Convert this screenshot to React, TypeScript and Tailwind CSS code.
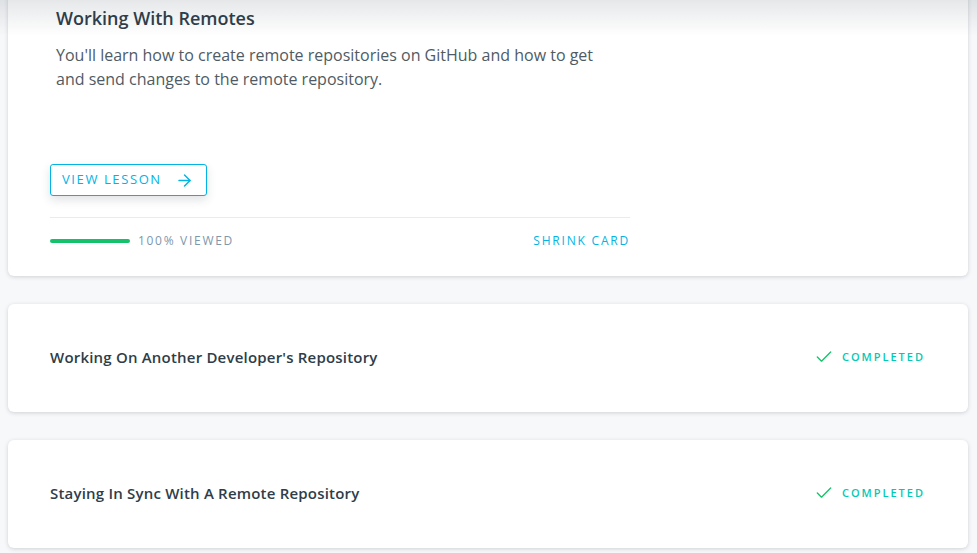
import { ArrowRight, Check } from 'lucide-react'

const lessons = [
  { title: "Working On Another Developer's Repository" },
  { title: 'Staying In Sync With A Remote Repository' },
]

const CollapsedCard = ({ title }: { title: string }) => (
  <div className="bg-white rounded-md shadow-[0_1px_4px_rgba(46,61,73,0.2)] h-[108px] pl-[42px] pr-[43px] pb-[2px] flex items-center justify-between">
    <h3 className="text-[15px] font-semibold text-[#2e3d49] tracking-[0.2px]">{title}</h3>
    <div className="flex items-center gap-[8px]">
      <Check size={20} strokeWidth={1.6} className="text-[#15c26b]" />
      <span className="text-[11px] font-semibold tracking-[2px] text-[#02c9b4]">COMPLETED</span>
    </div>
  </div>
)

export default function App() {
  return (
    <div className="relative w-[977px] h-[553px] overflow-hidden bg-[#f7f8fa] font-['Open_Sans',sans-serif]">
      {/* header shadow */}
      <div className="absolute inset-x-0 top-0 h-[36px] z-10 bg-gradient-to-b from-[rgba(46,61,73,0.12)] to-transparent pointer-events-none" />

      <div className="pl-2 pr-[9px] -mt-[20px] flex flex-col gap-[28px]">
        {/* Expanded card */}
        <div className="bg-white rounded-md shadow-[0_1px_4px_rgba(46,61,73,0.2)] pl-[42px] pt-[24px] pb-[26px]">
          <div className="w-[580px]">
            <h2 className="pl-[6px] text-[18px] font-semibold text-[#2e3d49] leading-[28px]">Working With Remotes</h2>
            <p className="pl-[6px] mt-[11px] w-[560px] text-[16px] leading-[24px] text-[#4f5b64]">
              You'll learn how to create remote repositories on GitHub and how to get and send changes to the remote repository.
            </p>
            <button className="mt-[73px] h-[32px] pl-[11px] pr-[12px] flex items-center gap-[13px] border border-[#02b3e4] rounded-[3px] bg-white shadow-[0_4px_10px_rgba(46,61,73,0.15)] text-[#02b3e4] text-[13px] tracking-[1.6px]">
              VIEW LESSON
              <ArrowRight size={19} strokeWidth={1.8} />
            </button>
            <div className="mt-[21px] border-t border-[#e9ebee] pt-[14px] flex items-center justify-between">
              <div className="flex items-center gap-[8px]">
                <div className="w-[80px] h-[4px] rounded-full bg-[#15c26b]" />
                <span className="text-[12px] tracking-[1.7px] text-[#7d97ad]">100% VIEWED</span>
              </div>
              <span className="text-[12px] tracking-[1.8px] text-[#02b3e4]">SHRINK CARD</span>
            </div>
          </div>
        </div>

        {lessons.map((l) => (
          <CollapsedCard key={l.title} title={l.title} />
        ))}
      </div>
    </div>
  )
}
